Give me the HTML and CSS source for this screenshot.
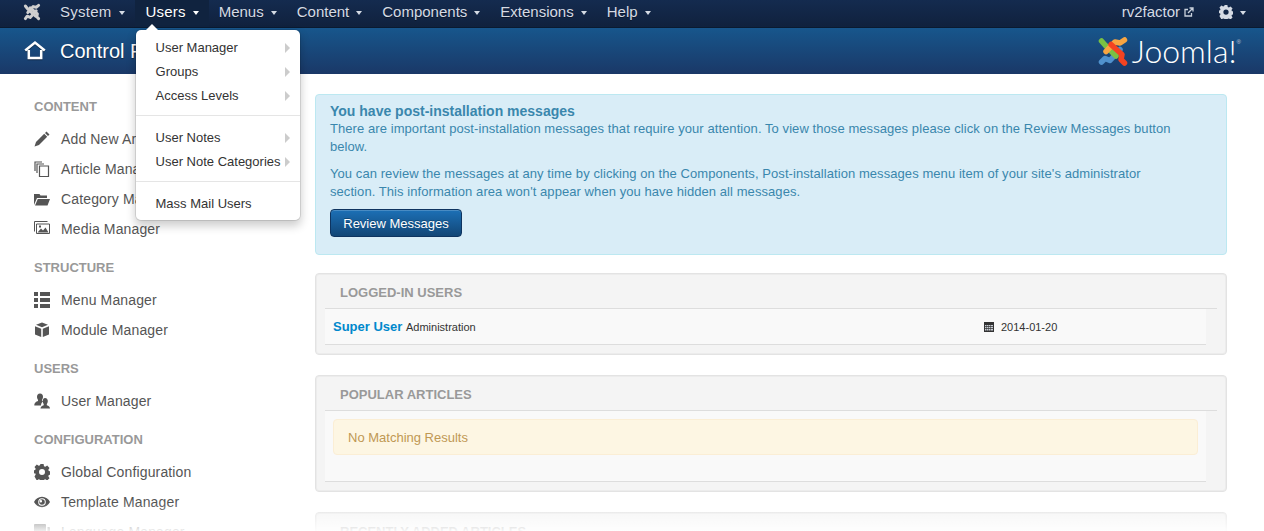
FILE: index.html
```html
<!DOCTYPE html>
<html lang="en">
<head>
<meta charset="utf-8">
<title>Control Panel</title>
<link rel="stylesheet" href="styles.css">
</head>
<body>
<svg class="defs" width="0" height="0" aria-hidden="true">
  <defs>
    <symbol id="gear" viewBox="0 0 16 16"><path fill-rule="evenodd" d="M6.400 0h3.200l.4 2.200 1.300.6 1.900-1.200 2.300 2.300-1.200 1.900.5 1.200 2.200.4v3.200l-2.200.4-.5 1.300 1.200 1.900-2.300 2.300-1.900-1.200-1.300.5-.4 2.200H6.400l-.4-2.200-1.300-.5-1.900 1.200L.5 12.500l1.200-1.900-.5-1.300L-.8 9.600V6.400l2-.4.500-1.200L.5 2.900l2.300-2.300 1.900 1.200L6 1.200 6.400 0zM8 5a3 3 0 1 0 0 6 3 3 0 0 0 0-6z"/></symbol>
  </defs>
</svg>

<div class="page">
  <header class="navbar">
    <svg class="nav-logo" viewBox="0 0 30 30" aria-hidden="true">
      <g fill="none" stroke="#cfcfcf" stroke-width="5" stroke-linecap="round" stroke-linejoin="round">
        <path d="M4 5 7 9 21 22"/><path d="M26 4 22 7 17 6 8 16"/><path d="M26 26 23 23 24 18 12 8"/><path d="M4 26 7 22 12 24 22 13"/>
      </g>
    </svg>
    <nav class="nav-list">
      <span class="nav-item">System<i class="caret"></i></span>
      <div class="nav-item active">Users<i class="caret"></i>
        <div class="dropdown">
          <a class="dd-item">User Manager<i class="dd-arrow"></i></a>
          <a class="dd-item">Groups<i class="dd-arrow"></i></a>
          <a class="dd-item">Access Levels<i class="dd-arrow"></i></a>
          <div class="dd-divider"></div>
          <a class="dd-item">User Notes<i class="dd-arrow"></i></a>
          <a class="dd-item">User Note Categories<i class="dd-arrow"></i></a>
          <div class="dd-divider"></div>
          <a class="dd-item">Mass Mail Users</a>
        </div>
      </div>
      <span class="nav-item">Menus<i class="caret"></i></span>
      <span class="nav-item">Content<i class="caret"></i></span>
      <span class="nav-item">Components<i class="caret"></i></span>
      <span class="nav-item">Extensions<i class="caret"></i></span>
      <span class="nav-item">Help<i class="caret"></i></span>
    </nav>
    <div class="nav-right">
      <span class="site-link">rv2factor
        <svg class="ext-icon" viewBox="0 0 10 10" aria-hidden="true"><path fill="none" stroke="#c9d1dc" stroke-width="1.300" d="M7.500 6v3H1V2.500h3M4 6l4.500-4.500M5.500 1H9v3.500"/></svg>
      </span>
      <span class="settings">
        <svg class="gear-icon" aria-hidden="true"><use href="#gear"/></svg><i class="caret"></i>
      </span>
    </div>
  </header>

  <div class="subhead">
    <svg class="home-icon" viewBox="0 0 22 20" aria-hidden="true"><path fill="none" stroke="#fff" stroke-width="2.500" stroke-linejoin="miter" d="M1.200 10.500 11 2.500l9.800 8M4.800 10v8h12.400v-8"/></svg>
    <h1 class="page-title">Control Panel</h1>
    <div class="brand">
      <svg class="brand-mark" viewBox="0 0 30 30" aria-hidden="true">
        <g fill="none" stroke-width="5.500" stroke-linecap="round" stroke-linejoin="round">
          <path stroke="#5091cd" d="M3.500 26 7 22.500 12 24.500 22 13.500"/>
          <path stroke="#7ac143" d="M3.500 5 7 9 18 20"/>
          <path stroke="#f9a541" d="M26.500 4 22 7 17 6 8 15.500"/>
          <path stroke="#f44321" d="M26.500 27 23 23.500 24 18.500 13 8.500"/>
        </g>
      </svg>
      <span class="brand-text">Joomla!</span><sup class="brand-reg">®</sup>
    </div>
  </div>

  <div class="layout">
    <aside class="sidebar">
      <h2 class="side-head">Content</h2>
      <a class="side-item">
        <svg class="side-icon" viewBox="0 0 16 16"><path d="M12.500.5 15.500 3.500 14 5 11 2zM10.200 2.800l3 3L5 14l-4.500 1.500L2 11z"/></svg>Add New Article</a>
      <a class="side-item">
        <svg class="side-icon" viewBox="0 0 16 16"><path fill="none" stroke="#555" stroke-width="1.200" d="M1 10V1h7M3 12V3h7M5.500 5h9v10.500h-9z"/></svg>Article Manager</a>
      <a class="side-item">
        <svg class="side-icon" viewBox="0 0 16 16"><path d="M0 3h5.500l1 1.500H13V7H3L0 14zM3.800 8H16l-2.500 6.500H1z"/></svg>Category Manager</a>
      <a class="side-item">
        <svg class="side-icon" viewBox="0 0 16 16"><path fill="none" stroke="#555" stroke-width="1" d="M.5 10.500V.5h13M2.500 3h13v9.500h-13z"/><path d="M3.500 11.500 7 7.500l2 2 2.500-3 3 5zM5 4.500h2v2H5z"/></svg>Media Manager</a>

      <h2 class="side-head">Structure</h2>
      <a class="side-item">
        <svg class="side-icon" viewBox="0 0 16 16"><path d="M0 0h4v4H0zM6 0h10v4H6zM0 6h4v4H0zM6 6h10v4H6zM0 12h4v4H0zM6 12h10v4H6z"/></svg>Menu Manager</a>
      <a class="side-item">
        <svg class="side-icon" viewBox="0 0 16 16"><path d="M8 .5 14 2.800 8 5.200 2 2.800zM1 4.200 7.200 6.700V15L1 12.500zM15 4.200V12.500L8.800 15V6.700z"/></svg>Module Manager</a>

      <h2 class="side-head">Users</h2>
      <a class="side-item">
        <svg class="side-icon" viewBox="0 0 16 16"><path d="M6 .5c2 0 3 1.500 3 3.200C9 5 8.500 6 8 6.700V8l1 .5c-1 .5-2 2-2 4H.3c0-2 .7-3.500 3.700-4.500V6.700C3.500 6 3 5 3 3.700 3 2 4 .5 6 .5zM11 5c2 0 2.800 1.500 2.800 3 0 1.300-.5 2.300-1 3v1.200c2 .7 3.200 1.700 3.200 3.300H6.500c0-1.600 1.200-2.600 3.200-3.300V11c-.5-.7-1-1.700-1-3 0-1.500.8-3 2.300-3z"/></svg>User Manager</a>

      <h2 class="side-head">Configuration</h2>
      <a class="side-item">
        <svg class="side-icon"><use href="#gear"/></svg>Global Configuration</a>
      <a class="side-item">
        <svg class="side-icon" viewBox="0 0 16 16"><path fill-rule="evenodd" d="M8 2.800c3.500 0 6.500 2.100 8 5.200-1.500 3.100-4.500 5.200-8 5.200S1.500 11.100 0 8c1.500-3.100 4.500-5.200 8-5.200zM8 4.200a3.800 3.800 0 1 0 0 7.600 3.800 3.800 0 0 0 0-7.600z"/><path fill-rule="evenodd" d="M8 5.200a2.800 2.800 0 1 1 0 5.600 2.800 2.800 0 0 1 0-5.600zM6.900 6a1.200 1.200 0 1 0 0 2.400 1.200 1.200 0 0 0 0-2.400z"/></svg>Template Manager</a>
      <a class="side-item">
        <svg class="side-icon" viewBox="0 0 16 16"><path d="M1 0h10a1 1 0 0 1 1 1v7a1 1 0 0 1-1 1H5l-3 3V9H1a1 1 0 0 1-1-1V1a1 1 0 0 1 1-1z"/><path d="M13.500 3H15a1 1 0 0 1 1 1v7a1 1 0 0 1-1 1h-1v3l-3-3H7l1.500-1.500H13a.5.500 0 0 0 .5-.5z"/></svg>Language Manager</a>
    </aside>

    <main class="main">
      <section class="alert-info">
        <h4 class="alert-title">You have post-installation messages</h4>
        <p class="alert-text">There are important post-installation messages that require your attention. To view those messages please click on the Review Messages button below.</p>
        <p class="alert-text">You can review the messages at any time by clicking on the Components, Post-installation messages menu item of your site's administrator section. This information area won't appear when you have hidden all messages.</p>
        <button class="btn-primary" type="button">Review Messages</button>
      </section>

      <section class="panel">
        <h2 class="panel-title">Logged-in Users</h2>
        <div class="panel-body">
          <div class="user-row">
            <div class="user-cell"><a class="user-name">Super User</a> <small class="user-role">Administration</small></div>
            <div class="date-cell">
              <svg class="cal-icon" viewBox="0 0 10 10" aria-hidden="true"><path fill="#333" d="M0 0h10v10H0z"/><path fill="#c9ced6" d="M1 3h1.500v1.300H1zM3 3h1.500v1.300H3zM5 3h1.500v1.300H5zM7 3h2v1.300H7zM1 5h1.500v1.300H1zM3 5h1.500v1.300H3zM5 5h1.500v1.300H5zM7 5h2v1.300H7zM1 7h1.500v1.600H1zM3 7h1.500v1.600H3zM5 7h1.500v1.600H5zM7 7h2v1.600H7z"/></svg>
              2014-01-20
            </div>
          </div>
        </div>
      </section>

      <section class="panel">
        <h2 class="panel-title">Popular Articles</h2>
        <div class="panel-body panel-body-pad">
          <div class="alert-warn">No Matching Results</div>
        </div>
      </section>

      <section class="panel">
        <h2 class="panel-title">Recently Added Articles</h2>
        <div class="panel-body panel-body-pad"></div>
      </section>
    </main>
  </div>

  <div class="fade"></div>
</div>
</body>
</html>
```
FILE: styles.css
```css
* { box-sizing: border-box; }
html, body { margin: 0; padding: 0; height: 100%; overflow: hidden; background: #fff; }
body { font-family: "Liberation Sans", Arial, sans-serif; font-size: 13px; line-height: 18px; color: #333; }
a { text-decoration: none; }
.defs { position: absolute; }
.page { position: relative; height: 531px; overflow: hidden; }

/* top bar */
.navbar {
  display: flex; align-items: stretch; height: 28px; padding-left: 23px;
  background: linear-gradient(#142b4f, #10213d);
  border-bottom: 1px solid #0a1a30;
  color: #d5dbe4; font-size: 15px;
}
.nav-logo { width: 18px; height: 18px; margin-top: 3px; flex: none; }
.nav-list { display: flex; margin-left: 9px; }
.nav-item { position: relative; display: flex; align-items: center; padding: 0 10px 3px; height: 27px; text-shadow: 0 1px 0 rgba(0,0,0,.4); }
.nav-item:first-child { letter-spacing: .25px; }
.nav-item.active { padding-left: 11px; letter-spacing: .2px; background: #10233f; color: #fff; }
.caret { display: inline-block; width: 0; height: 0; margin: 1px 0 0 7px; border-style: solid; border-width: 4px 3.500px 0; border-color: currentColor transparent transparent; }
.nav-right { display: flex; align-items: center; margin-left: auto; height: 27px; padding: 0 18px 3px 0; }
.site-link { display: flex; align-items: center; }
.ext-icon { width: 10px; height: 10px; margin-left: 4px; }
.settings { display: flex; align-items: center; margin-left: 25px; }
.gear-icon { width: 14px; height: 14px; fill: #d5dbe4; }
.settings .caret { margin-left: 7px; }

/* dropdown */
.dropdown {
  position: absolute; top: 29px; left: 0; width: 166px; padding: 5px 0; z-index: 20;
  background: #fff; border-radius: 6px; border: 1px solid rgba(0,0,0,.1);
  box-shadow: 0 5px 10px rgba(0,0,0,.2);
  background-clip: padding-box;
  font-size: 13px; letter-spacing: 0; color: #333; text-shadow: none;
}
.dropdown::before {
  content: ""; position: absolute; top: -6px; left: 10px; width: 0; height: 0;
  border-style: solid; border-width: 0 6px 6px; border-color: transparent transparent #fff;
}
.dd-item { display: flex; align-items: center; justify-content: space-between; height: 24px; padding: 2px 10px 0 20px; color: #333; white-space: nowrap; }
.dd-arrow { width: 0; height: 0; border-style: solid; border-width: 5px 0 5px 5px; border-color: transparent transparent transparent #ccc; }
.dd-divider { height: 1px; margin: 8px 0 9px; background: #e5e5e5; }

/* subhead */
.subhead {
  display: flex; align-items: center; height: 46px; padding-left: 24px; position: relative;
  background: linear-gradient(#17568c, #1a3867);
  color: #fff;
}
.home-icon { width: 22px; height: 20px; margin-top: -2px; flex: none; filter: drop-shadow(0 1px 0 rgba(0,0,0,.4)); }
.page-title { margin: 0 0 0 14px; font-size: 20px; font-weight: 400; line-height: 24px; text-shadow: 0 1px 1px rgba(0,0,0,.4); }
.brand { display: flex; align-items: center; margin-left: auto; margin-right: 23px; }
.brand-mark { width: 30px; height: 30px; flex: none; }
.brand-text { margin-left: 4px; font-family: Lato, "Open Sans", sans-serif; font-weight: 300; font-size: 32px; line-height: 30px; color: #fff; }
.brand-reg { font-size: 6px; line-height: 6px; align-self: flex-start; margin-top: 3px; color: #ccd; }

/* layout */
.layout { display: flex; align-items: flex-start; }
.sidebar { width: 315px; flex: none; padding: 24px 0 0 34px; }
.side-head { margin: 15px 0 8px; font-size: 13px; font-weight: 700; line-height: 18px; color: #999; text-transform: uppercase; }
.side-head:first-child { margin-top: 0; }
.side-item { display: flex; align-items: center; height: 30px; font-size: 14px; letter-spacing: .14px; color: #555; white-space: nowrap; }
.side-icon { width: 16px; height: 16px; margin-right: 11px; fill: #555; flex: none; }

.main { width: 912px; flex: none; padding-top: 20px; }

/* info alert */
.alert-info {
  padding: 7px 50px 17px 14px; margin-bottom: 18px;
  background: #d9edf7; border: 1px solid #bce8f1; border-radius: 4px; color: #3a87ad;
}
.alert-title { margin: 0; font-size: 14px; line-height: 18px; font-weight: 700; }
.alert-text { margin: 0 0 9px; letter-spacing: .07px; }
.alert-text + .alert-text { margin-bottom: 8px; }
.btn-primary {
  display: block; height: 28px; width: 132px; padding: 1px 0 0; font: 13px/18px "Liberation Sans", Arial, sans-serif; color: #fff;
  background: linear-gradient(#1c70b6, #124676); border: 1px solid #0e3460; border-radius: 4px;
  box-shadow: inset 0 1px 0 rgba(255,255,255,.2); text-shadow: 0 -1px 0 rgba(0,0,0,.25);
}

/* panels */
.panel {
  margin-bottom: 20px; padding: 0 9px 9px;
  background: #f4f4f4; border: 1px solid #e3e3e3; border-radius: 4px;
  box-shadow: inset 0 0 0 1px #ececec;
}
.panel-title {
  margin: 0; height: 35px; padding: 10px 0 0 15px; font-size: 13px; font-weight: 700; line-height: 18px;
  color: #999; text-transform: uppercase; border-bottom: 1px solid #ddd;
}
.panel-body { margin-right: 11px; background: #f9f9f9; border-bottom: 1px solid #ddd; }
.panel-body-pad { padding: 8px 8px 26px; }
.user-row { display: flex; align-items: center; height: 35px; padding-left: 8px; }
.user-cell { width: 651px; flex: none; }
.user-name { font-weight: 700; color: #0088cc; }
.user-role { font-size: 11px; color: #333; }
.date-cell { display: flex; align-items: center; font-size: 11px; color: #333; }
.cal-icon { width: 10px; height: 10px; margin-right: 7px; }
.alert-warn {
  height: 36px; padding: 9px 14px 0; background: #fdf6e3; border: 1px solid #fbeed5; border-radius: 4px; color: #c09853;
}

.fade {
  position: absolute; left: 0; right: 0; bottom: 0; height: 28px; z-index: 5;
  background: linear-gradient(rgba(255,255,255,0), rgba(255,255,255,.9));
}
```
